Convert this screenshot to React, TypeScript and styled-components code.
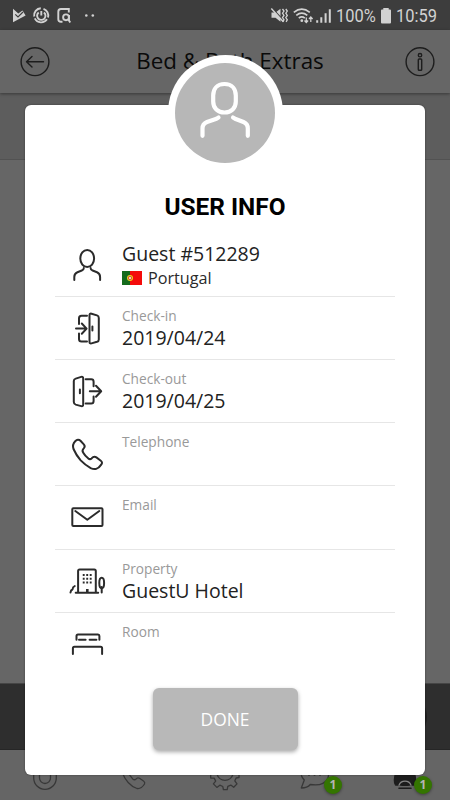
import React from "react";
import styled, { createGlobalStyle } from "styled-components";

const Global = createGlobalStyle`
  * { box-sizing: border-box; }
  html, body { margin: 0; padding: 0; overflow: hidden; }
  body { font-family: "Open Sans", "Noto Sans", sans-serif; }
`;

const Screen = styled.div`
  position: relative;
  width: 450px;
  height: 800px;
  overflow: hidden;
  display: flex;
  flex-direction: column;
  background: #666;
`;

const StatusBar = styled.div`
  height: 30px;
  flex: none;
  display: flex;
  justify-content: space-between;
  background: #3d3d3d;
  color: #d2d2d2;
`;

const StatusRight = styled.div`
  display: flex;
  height: 30px;
`;

const StatusText = styled.span<{ $w: number; $squeeze: number }>`
  width: ${(p) => p.$w}px;
  font: 400 18.5px/33px Roboto, sans-serif;
  white-space: nowrap;
  transform: scaleX(${(p) => p.$squeeze});
  transform-origin: 0 50%;
`;

const Header = styled.header`
  height: 63px;
  flex: none;
  display: flex;
  align-items: center;
  justify-content: space-between;
  padding: 0 14px 0 19px;
  background: #666;
  box-shadow: 0 1px 3px rgba(0, 0, 0, 0.4);
  z-index: 1;
`;

const Title = styled.h1`
  margin: 0;
  padding: 0 0 2px 5px;
  font-size: 22.4px;
  font-weight: 400;
  line-height: 30px;
  color: #0a0a0a;
  white-space: nowrap;
`;

const SubBar = styled.div`
  height: 67px;
  flex: none;
  background: #5d5d5d;
  border-bottom: 1px solid #525252;
`;

const Content = styled.div`
  flex: 1;
  background: #666;
`;

const ActionBar = styled.div`
  height: 67px;
  flex: none;
  display: flex;
  align-items: center;
  justify-content: flex-end;
  padding-right: 23px;
  background: #2e2e2e;
  border-top: 1px solid #454545;
  border-bottom: 1px solid #262626;
`;

const ActionKnob = styled.div`
  width: 46px;
  height: 46px;
  border-radius: 50%;
  background: #1f1f1f;
`;

const TabBar = styled.nav`
  height: 50px;
  flex: none;
  display: grid;
  grid-template-columns: repeat(5, 90px);
  background: #656565;
`;

const Tab = styled.div`
  position: relative;
  height: 50px;
`;

const Badge = styled.span`
  position: absolute;
  left: 54px;
  top: 26px;
  width: 18px;
  height: 18px;
  border-radius: 50%;
  background: #347500;
  color: #b4b4b4;
  font: 700 12px/18px "Noto Sans", sans-serif;
  text-align: center;
  box-shadow: 0 1px 3px rgba(0, 0, 0, 0.4);
`;

const Dialog = styled.section`
  position: absolute;
  left: 25px;
  top: 105px;
  width: 400px;
  height: 670px;
  padding: 0 30px;
  border-radius: 6px;
  background: #fff;
  display: flex;
  flex-direction: column;
  align-items: center;
  box-shadow: 0 0 2px rgba(0, 0, 0, 0.45);
  z-index: 2;
`;

const Avatar = styled.div`
  width: 115px;
  height: 115px;
  margin-top: -50px;
  flex: none;
  padding: 7.5px;
  border-radius: 50%;
  background: #fff;
`;

const AvatarDisc = styled.div`
  width: 100px;
  height: 100px;
  border-radius: 50%;
  background: #b7b7b7;
`;

const DialogTitle = styled.h2`
  margin: 22px 0 0;
  height: 28px;
  font: 700 24.4px/30px Roboto, sans-serif;
  color: #000;
  white-space: nowrap;
`;

const Rows = styled.div`
  width: 340px;
  margin-top: 13.6px;
`;

const Row = styled.div`
  height: 63.2px;
  display: flex;
  border-bottom: 1.4px solid #e6e6e6;
  &:last-child { border-bottom-color: transparent; }
`;

const IconCell = styled.div`
  width: 67px;
  padding: 11px 0 0 12px;
  svg { display: block; }
`;

const Fields = styled.div<{ $top: number }>`
  display: flex;
  flex-direction: column;
  padding-top: ${(p) => p.$top}px;
`;

const Label = styled.div`
  font-size: 13.7px;
  line-height: 20px;
  height: 19px;
  color: #999;
`;

const Value = styled.div`
  font-size: 19.5px;
  line-height: 25px;
  color: #222;
  white-space: nowrap;
`;

const Country = styled.div`
  display: flex;
  align-items: center;
  gap: 6px;
  height: 24px;
  font-size: 16.2px;
  color: #2a2a2a;
`;

const DoneButton = styled.button`
  width: 145px;
  height: 62px;
  margin-top: 12px;
  padding: 0;
  flex: none;
  border: 0;
  border-radius: 6px;
  background: #b8b8b8;
  color: #fff;
  font: 400 17.4px/63px "Open Sans", sans-serif;
  box-shadow: 0 2px 4px rgba(0, 0, 0, 0.35);
`;

const Line = styled.svg`
  fill: none;
  stroke: #2b2b2b;
  stroke-width: 2;
  stroke-linecap: round;
  stroke-linejoin: round;
`;

const Glyph = ({ children }: { children: React.ReactNode }) => (
  <Line width="40" height="40" viewBox="0 0 40 40">{children}</Line>
);

const icons = {
  user: (
    <Glyph>
      <ellipse cx="20.2" cy="13.5" rx="6.9" ry="8.600" />
      <path d="M7.300 35V32q0-3.600 3.100-4.800l4.400-1.700q2-.8 2-2.500M33.100 35V32q0-3.600-3.100-4.800l-4.400-1.700q-2-.8-2-2.500" />
    </Glyph>
  ),
  checkIn: (
    <Glyph>
      <path d="M20 7.800H14.500q-2.500 0-2.500 2.500V16M12 25.500V31q0 2.500 2.500 2.500H20M9 20.600h10M14.800 15.500l4.800 5.100-4.800 5.100M22.500 7.200q0-2 2-1.500l5.500 1.700q1.800.6 1.800 2.500v21.500q0 1.800-1.800 2.400l-5.500 1.600q-2 .5-2-1.500zM25.400 18.600v4" />
    </Glyph>
  ),
  checkOut: (
    <Glyph>
      <path d="M18.700 8.300h5.500q2.400 0 2.400 2.400v4.500M26.600 25.600V30q0 2.500-2.400 2.500h-5.500M22.800 20.300h11M29 14.800l5.200 5.500-5.200 5.500M16.200 7.400q0-2-2-1.500L8.700 7.600q-1.900.6-1.900 2.500v21q0 1.900 1.900 2.500l5.500 1.500q2 .5 2-1.500zM12.900 18.500v3.800" />
    </Glyph>
  ),
  phone: (
    <Glyph>
      <path d="M8.200 7.300Q11 4.300 13.500 6.800l3.300 3.600q1.700 1.900.1 3.700-2.200 2.200-.8 4.300 2 3.500 5.300 6.200 1.700 1.200 3.200-.2 2.300-2.800 4.800-1l4.400 3.300q2.200 1.700.4 3.900-2.200 3.400-5 4.300-2.500.7-5.500-.8-5.500-3-10-7.700-4.400-5-7.200-11.400-1.500-4.400 1.700-7.700z" />
    </Glyph>
  ),
  mail: (
    <Glyph>
      <rect x="5.300" y="11.200" width="30.200" height="17.800" rx="1" />
      <path d="m8.300 14 12 8.700 12-8.700" />
    </Glyph>
  ),
  hotel: (
    <Glyph>
      <path d="M11.100 31.500V10q0-1.500 1.500-1.500h14.700q1.500 0 1.500 1.500v21.500M8.700 31.700h22.500M34.700 26v5.500M3.500 31.500q.2-2.500 2-3 .2-2.700 2.200-3.400" />
      <ellipse cx="34.700" cy="22" rx="2.400" ry="5.200" />
      <path d="M20.300 28v3" strokeWidth="2.600" strokeLinecap="butt" />
      <path d="M16.700 13v10M20.200 13v10M23.700 13v10" strokeWidth="1.900" strokeDasharray="2 1.700" strokeLinecap="butt" />
    </Glyph>
  ),
  bed: (
    <Glyph>
      <path d="M9.500 15.700V12q0-1.500 1.500-1.500h20q1.400 0 1.400 1.500v3.700M12 15.800h6.600M22.600 15.800h6.800M5.900 30V24.300q0-1.500 1.500-1.500h26.200q1.500 0 1.500 1.500V30" />
    </Glyph>
  ),
};

const Flag = () => (
  <svg width="20" height="14" viewBox="0 0 20 14">
    <rect width="20" height="14" fill="#f40b0b" />
    <rect width="8" height="14" fill="#146b1c" />
    <circle cx="8" cy="7" r="3" fill="#e8d61c" />
    <circle cx="8" cy="7" r="2" fill="#d8493a" />
    <circle cx="8" cy="7" r="1" fill="#fff" />
  </svg>
);

const details = [
  { icon: icons.checkIn, label: "Check-in", value: "2019/04/24" },
  { icon: icons.checkOut, label: "Check-out", value: "2019/04/25" },
  { icon: icons.phone, label: "Telephone", value: "" },
  { icon: icons.mail, label: "Email", value: "" },
  { icon: icons.hotel, label: "Property", value: "GuestU Hotel" },
  { icon: icons.bed, label: "Room", value: "" },
];

const NotificationIcons = () => (
  <svg width="110" height="30" viewBox="0 0 110 30" fill="none" stroke="#d2d2d2" strokeWidth="1.900">
    <path d="M13 8.700 18.300 13.500 22.500 10.500 25.600 15.400 13 22.300z" fill="#d2d2d2" stroke="none" />
    <path d="M15.300 14.300l2.700 2.700 5-5" stroke="#3d3d3d" strokeWidth="1.200" />
    <path d="M43.500 8.800a7.100 7.100 0 0 1 4.500 8.600M47 19.300a7.100 7.100 0 0 1-12.200-.9M34.200 16.500a7.100 7.100 0 0 1 6.600-8.200" />
    <path d="M38.700 12.400a4.200 4.200 0 1 0 5.200 0M41.300 11v4.600" />
    <path d="M68.800 12.500V9H61q-2.700 0-2.700 2.700v7.600q0 2.500 2.700 2.500h1.500" />
    <circle cx="66" cy="17.300" r="2.900" />
    <path d="M68.200 19.300l2 3.200M69 15v6" />
    <circle cx="86.300" cy="15.500" r="1.300" fill="#d2d2d2" stroke="none" />
    <circle cx="92.800" cy="15.500" r="1.300" fill="#d2d2d2" stroke="none" />
  </svg>
);

const SignalIcons = () => (
  <svg width="67" height="30" viewBox="268 0 67 30" fill="none" stroke="#d2d2d2" strokeWidth="1.700">
    <path d="M270.500 12.500h4l5-3.700v13l-5-4h-4z" fill="#d2d2d2" stroke="none" />
    <path d="M271.500 8.500l11 12" stroke="#3d3d3d" strokeWidth="1.200" />
    <path d="M270.300 8.500l12 13.300" strokeWidth="1.400" />
    <path d="M281.500 9l1.500 2-1.500 2.200 1.500 2.200-1.500 2.200 1.500 2.200-1.200 2M284.800 9l1.500 2-1.500 2.200 1.500 2.200-1.500 2.200 1.500 2.200-1.200 2" strokeWidth="1.300" />
    <path d="M292.800 12.300q8-6.300 16 0M295.300 15.300q5.500-4.500 11 0M297.800 18.200q3-2.500 6 0" />
    <circle cx="300.800" cy="20.700" r="1.400" fill="#d2d2d2" stroke="none" />
    <path d="M305.300 22.600v-5M303.500 20.500l1.800 2 1.800-2M309.800 17v5M308 19l1.800-2 1.800 2" strokeWidth="1.300" />
    <path d="M316.200 22.800v-2.500M320.300 22.800v-5.500M324.600 22.800v-9.500M328.800 22.800V9.200" strokeWidth="2" />
  </svg>
);

const Battery = () => (
  <svg width="17" height="30" viewBox="0 0 17 30">
    <path d="M3 9.500h1.300V8h5.400v1.500H11q1 0 1 1v12q0 1-1 1H3q-1 0-1-1v-12q0-1 1-1z" fill="#d2d2d2" />
  </svg>
);

const HeaderIcon = ({ children }: { children: React.ReactNode }) => (
  <svg width="32" height="32" viewBox="0 0 32 32" fill="none" stroke="#1d1d1d" strokeWidth="1.400" strokeLinecap="round" strokeLinejoin="round">
    <circle cx="16" cy="15.700" r="13.900" />
    {children}
  </svg>
);

const TabIcon = ({ children }: { children: React.ReactNode }) => (
  <svg width="90" height="50" viewBox="0 0 90 50" fill="none" stroke="#383838" strokeWidth="1.300" strokeLinecap="round" strokeLinejoin="round">
    {children}
  </svg>
);

export default function App() {
  return (
    <Screen>
      <Global />
      <StatusBar>
        <NotificationIcons />
        <StatusRight>
          <SignalIcons />
          <StatusText $w={43} $squeeze={0.89}>100%</StatusText>
          <Battery />
          <StatusText $w={54} $squeeze={0.89}>10:59</StatusText>
        </StatusRight>
      </StatusBar>
      <Header>
        <HeaderIcon>
          <path d="M24.500 15.700H7.500M13 10.500 7.500 15.700l5.500 5.200" />
        </HeaderIcon>
        <Title>Bed &amp; Bath Extras</Title>
        <HeaderIcon>
          <rect x="14.300" y="13" width="3.400" height="11.300" rx=".8" />
          <circle cx="16" cy="9.200" r="1.700" />
        </HeaderIcon>
      </Header>
      <SubBar />
      <Content />
      <ActionBar>
        <ActionKnob />
      </ActionBar>
      <TabBar>
        <Tab>
          <TabIcon>
            <path d="M33.700 22v6a11.300 11.300 0 0 0 22.600 0v-6M39.500 22v6a5.500 5.500 0 0 0 11 0v-6" />
          </TabIcon>
        </Tab>
        <Tab>
          <TabIcon>
            <path d="M32 22q5 13 15 16.500 4 .8 7.500-4.500.8-1.800-1-3l-4-2.700q-2-1.300-3.600.9-1.400 1.300-3.200-.3l-4-5" />
          </TabIcon>
        </Tab>
        <Tab>
          <TabIcon>
            <path d="M32 22.500l-1.300.6v5h3.500l1.500 3-2.300 2.800 3.500 3.500 2.900-2.200 3 1.300.6 3.200h3.800l.6-3.300 3-1.300 2.900 2.200 3.300-3.400-2.200-3 1.300-2.900 2.900-.5v-4.500l-2-.5" />
            <path d="M37 24a8.200 8.200 0 0 0 16 0" />
          </TabIcon>
        </Tab>
        <Tab>
          <TabIcon>
            <path d="M31 22q-.2 4.500 3.300 8l-3 8q6 0 9-3.500 13 2.200 17.500-6 1.200-2.500.6-6.500" />
            <path d="M39 24v1M44.500 24v1M50 24v1" strokeWidth="2" />
          </TabIcon>
          <Badge>1</Badge>
        </Tab>
        <Tab>
          <TabIcon>
            <path d="M36 22h18q3 9 .5 13H35.500q-2.500-4 .5-13z" fill="#1d1d1d" stroke="#1d1d1d" />
            <path d="M39 35.200q1.500-4 6-4t6 4" stroke="#858585" />
            <path d="M41 36q1-2.200 4-2.200t4 2.200z" fill="#1d1d1d" stroke="none" />
            <path d="M39 38.300h12" stroke="#1d1d1d" strokeWidth="1.600" />
          </TabIcon>
          <Badge>1</Badge>
        </Tab>
      </TabBar>

      <Dialog>
        <Avatar>
          <AvatarDisc>
            <svg width="100" height="100" viewBox="0 0 100 100" fill="none" stroke="#fff" strokeWidth="4.200" strokeLinecap="round" strokeLinejoin="round">
              <path d="M49.500 21c-7.500 0-11.300 5-11.300 11.500v6c0 6.500 4.500 11 11.300 11s11.300-4.500 11.300-11v-6c0-6.500-3.800-11.500-11.300-11.500z" />
              <path d="M43.500 54.500l-2 1.200-9.500 3.300q-4.500 1.800-4.500 6.500v7.300M58 54.500l2 1.200 8.500 3.300q4.300 1.800 4.300 6.500v7.300" />
            </svg>
          </AvatarDisc>
        </Avatar>
        <DialogTitle>USER INFO</DialogTitle>
        <Rows>
          <Row>
            <IconCell>{icons.user}</IconCell>
            <Fields $top={7.5}>
              <Value>Guest #512289</Value>
              <Country>
                <Flag />
                Portugal
              </Country>
            </Fields>
          </Row>
          {details.map((d) => (
            <Row key={d.label}>
              <IconCell>{d.icon}</IconCell>
              <Fields $top={9}>
                <Label>{d.label}</Label>
                <Value>{d.value}</Value>
              </Fields>
            </Row>
          ))}
        </Rows>
        <DoneButton>DONE</DoneButton>
      </Dialog>
    </Screen>
  );
}
